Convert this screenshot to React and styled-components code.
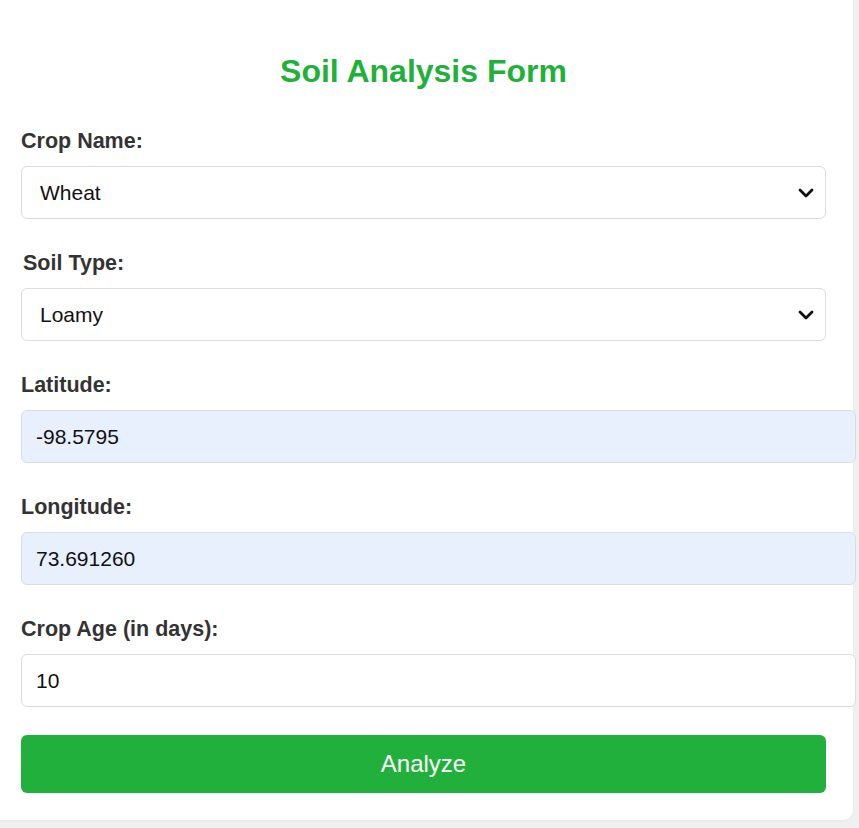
import React, { useState } from 'react'
import styled, { createGlobalStyle } from 'styled-components'

const GlobalStyle = createGlobalStyle`
  html, body {
    margin: 0;
    padding: 0;
    background: #f0f0f0;
    overflow: hidden;
  }
  * {
    font-family: 'Liberation Sans', Arial, sans-serif;
  }
`

const cropOptions = ['Wheat', 'Rice', 'Maize', 'Cotton', 'Sugarcane']
const soilOptions = ['Loamy', 'Clay', 'Sandy', 'Silty', 'Peaty']

export default function App() {
  const [crop, setCrop] = useState('Wheat')
  const [soil, setSoil] = useState('Loamy')
  const [lat, setLat] = useState('-98.5795')
  const [lng, setLng] = useState('73.691260')
  const [age, setAge] = useState('10')

  return (
    <Page>
      <GlobalStyle />
      <Card onSubmit={(e) => e.preventDefault()}>
        <Title>Soil Analysis Form</Title>

        <Field>
          <Label>Crop Name:</Label>
          <SelectWrap>
            <Select value={crop} onChange={(e) => setCrop(e.target.value)}>
              {cropOptions.map((c) => (
                <option key={c}>{c}</option>
              ))}
            </Select>
            <Chevron />
          </SelectWrap>
        </Field>

        <Field>
          <Label $shift>Soil Type:</Label>
          <SelectWrap>
            <Select value={soil} onChange={(e) => setSoil(e.target.value)}>
              {soilOptions.map((s) => (
                <option key={s}>{s}</option>
              ))}
            </Select>
            <Chevron />
          </SelectWrap>
        </Field>

        <Field>
          <Label>Latitude:</Label>
          <Input $filled value={lat} onChange={(e) => setLat(e.target.value)} />
        </Field>

        <Field>
          <Label>Longitude:</Label>
          <Input $filled value={lng} onChange={(e) => setLng(e.target.value)} />
        </Field>

        <Field $last>
          <Label>Crop Age (in days):</Label>
          <Input value={age} onChange={(e) => setAge(e.target.value)} />
        </Field>

        <Button type="submit">Analyze</Button>
      </Card>
    </Page>
  )
}

function Chevron() {
  return (
    <ChevronIcon viewBox="0 0 16 10" width="16" height="10">
      <path d="M2 2l6 6 6-6" fill="none" stroke="#111" strokeWidth="2.8" strokeLinecap="round" strokeLinejoin="round" />
    </ChevronIcon>
  )
}

const Page = styled.div`
  width: 859px;
  height: 828px;
  background: #f0f0f0;
  overflow: hidden;
`

const Card = styled.form`
  display: flex;
  flex-direction: column;
  width: 865px;
  height: 832px;
  margin: -12px 0 0 -12px;
  box-sizing: border-box;
  padding: 65px 27px 0 33px;
  background: #fff;
  border-radius: 10px;
  box-shadow: 0 1px 3px rgba(0, 0, 0, 0.04);
`

const Title = styled.h2`
  margin: 0 0 39px;
  text-align: center;
  font-size: 32px;
  line-height: 37px;
  font-weight: bold;
  color: #21b13b;
`

const Field = styled.div`
  display: flex;
  flex-direction: column;
  margin-bottom: ${({ $last }) => ($last ? '28px' : '32px')};
`

const Label = styled.label`
  display: block;
  margin: 0 0 13px ${({ $shift }) => ($shift ? '2px' : '0')};
  font-size: 21.5px;
  line-height: 24px;
  font-weight: bold;
  color: #333;
`

const SelectWrap = styled.div`
  position: relative;
  width: 805px;
`

const Select = styled.select`
  appearance: none;
  width: 100%;
  height: 53px;
  box-sizing: border-box;
  padding: 0 40px 0 18px;
  border: 1.5px solid #dcdcdc;
  border-radius: 6px;
  background: #fff;
  font-size: 21px;
  color: #111;
  outline: none;
`

const ChevronIcon = styled.svg`
  position: absolute;
  right: 12px;
  top: 22px;
  pointer-events: none;
`

const Input = styled.input`
  width: 805px;
  height: 51px;
  padding: 0 14px;
  border: 1.5px solid #dcdcdc;
  border-radius: 6px;
  background: ${({ $filled }) => ($filled ? '#e8f0fe' : '#fff')};
  font-size: 21px;
  color: #111;
  outline: none;
`

const Button = styled.button`
  width: 805px;
  height: 58px;
  border: none;
  border-radius: 6px;
  background: #22b03c;
  color: #fff;
  font-size: 24px;
  cursor: pointer;
`
